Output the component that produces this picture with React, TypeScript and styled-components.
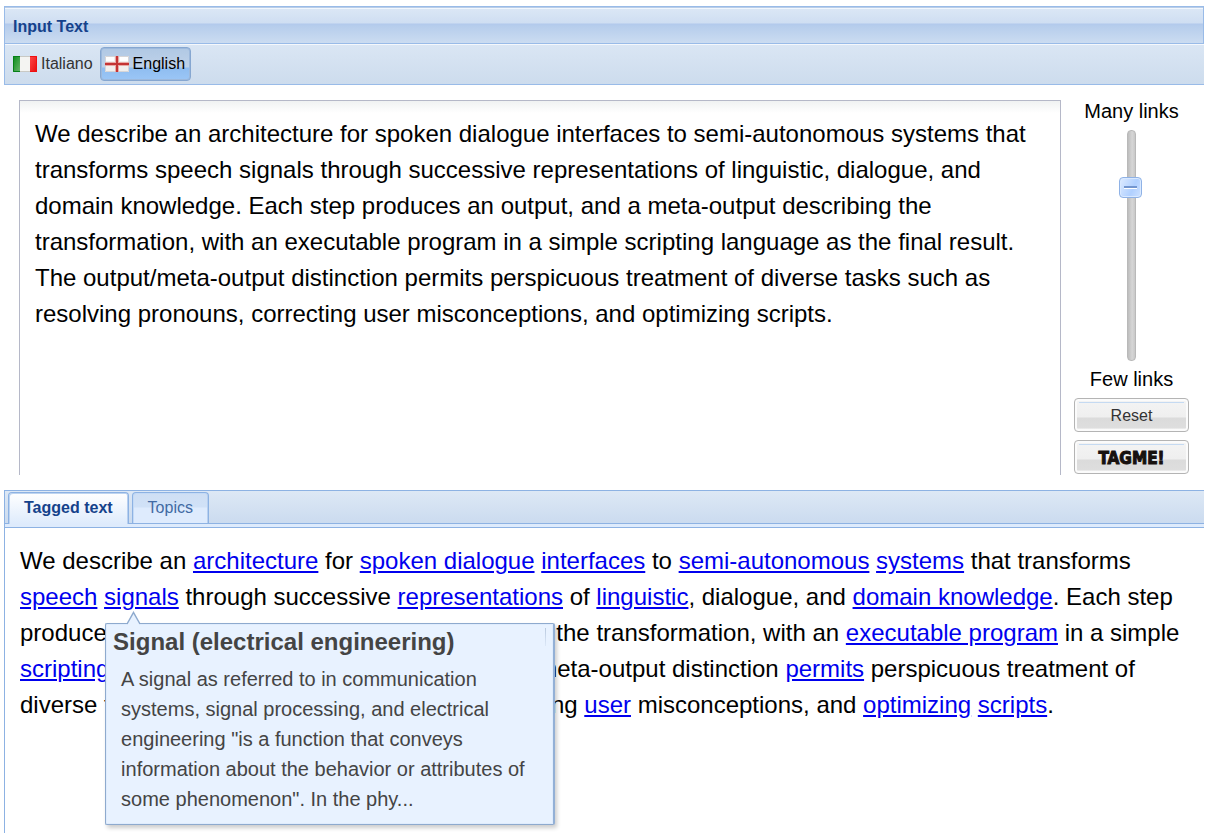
import React, { useState } from "react";
import styled, { createGlobalStyle } from "styled-components";

const GlobalStyle = createGlobalStyle`
  * { box-sizing: border-box; }
  body {
    margin: 0;
    background: #fff;
    color: #000;
    font-family: "Liberation Sans", Arial, sans-serif;
    font-size: 16px;
  }
`;

const Page = styled.main`
  display: flex;
  flex-direction: column;
  min-height: 100vh;
  padding: 6px 3px 0 4px;
`;

const PanelHeader = styled.h1`
  margin: 0;
  height: 38px;
  padding: 1px 8px 0;
  border: 1px solid #99bbe8;
  box-shadow: inset 0 1px #b9cde8, inset 0 2px #f2f7fd;
  background: linear-gradient(#dce8f6 0, #cfdef2 16px, #b2c9ec 17px, #b6cdec 19px, #cbdcf1 100%);
  color: #15428b;
  font-size: 16px;
  line-height: 38px;
`;

const Toolbar = styled.div`
  display: flex;
  align-items: center;
  gap: 2px;
  height: 41px;
  padding-left: 4px;
  border-left: 1px solid #99bbe8;
  border-bottom: 1px solid #99bbe8;
  box-shadow: inset 0 1px #f5f8fc;
  background: linear-gradient(#dae6f4, #cddced);
`;

const LanguageButton = styled.button<{ $active: boolean }>`
  display: flex;
  align-items: center;
  gap: 4px;
  height: 34px;
  padding: 0 ${(p) => (p.$active ? "5px" : "4px")} 0 4px;
  border: 1px solid ${(p) => (p.$active ? "#86a7d1" : "transparent")};
  border-left-width: ${(p) => (p.$active ? "1px" : "0")};
  border-radius: 4px;
  box-shadow: ${(p) => (p.$active ? "inset 0 0 0 1px #9db9dc" : "none")};
  background: ${(p) =>
    p.$active
      ? "linear-gradient(#b0c8e4 0, #bfd2e9 19px, #8fbdf0 20px, #9bc6f6 100%)"
      : "none"};
  color: ${(p) => (p.$active ? "#000" : "#333")};
  font: inherit;
  cursor: pointer;
`;

const InputArea = styled.section`
  display: grid;
  grid-template-columns: 1fr 115px;
  gap: 13px;
  padding: 15px;
`;

const SourceText = styled.textarea`
  display: block;
  width: 100%;
  height: 375px;
  padding: 15px;
  border: 1px solid #b5b8c8;
  border-bottom: 0;
  outline: none;
  resize: none;
  background: linear-gradient(#f0f2f2, #fff 12px);
  color: #000;
  font: 24px/36px "Liberation Sans", Arial, sans-serif;
`;

const Controls = styled.div`
  display: flex;
  flex-direction: column;
  align-items: center;
`;

const SliderLabel = styled.label`
  font-size: 20px;
  line-height: 22px;
`;

const Slider = styled.input`
  appearance: none;
  writing-mode: vertical-lr;
  direction: rtl;
  width: 23px;
  height: 231px;
  margin: 8px 0 7px;
  background: none;
  cursor: pointer;

  &::-webkit-slider-runnable-track {
    width: 9px;
    border: 1px solid #b9b9b9;
    border-radius: 4px;
    background: linear-gradient(to right, #bdbdbd, #d6d6d6 60%, #c8c8c8);
    margin: 0 auto;
  }

  &::-webkit-slider-thumb {
    appearance: none;
    width: 23px;
    height: 21px;
    margin-left: -9px;
    border: 1px solid #8fb2e6;
    border-radius: 4px;
    box-shadow: inset 0 0 0 1px #d9e9ff;
    background:
      linear-gradient(#7396cf, #7396cf) center 8px / 13px 2px no-repeat,
      linear-gradient(#fff, #fff) center 10px / 13px 1px no-repeat,
      linear-gradient(115deg, #deebff, #b0d0ff 60%, #cfe2ff);
  }
`;

const ActionButton = styled.button`
  display: flex;
  align-items: center;
  justify-content: center;
  width: 100%;
  height: 34px;
  margin-top: 8px;
  padding: 2px 0 0;
  border: 1px solid #b4b4b4;
  border-radius: 4px;
  box-shadow: inset 0 0 0 2px #fbfbfb;
  background:
    linear-gradient(#c5daf2, #c5daf2) center 3px / calc(100% - 8px) 1px no-repeat,
    linear-gradient(#f4f4f4 0, #efefef 18px, #dbdbdb 19px, #dedede 29px, #f5f5f5 30px);
  color: #333;
  font: inherit;
  cursor: pointer;
`;

const LogoText = styled.span`
  color: #17110f;
  font-family: "DejaVu Sans Condensed", "DejaVu Sans", sans-serif;
  font-size: 17px;
  font-weight: 700;
  line-height: 24px;
  -webkit-text-stroke: 1px #17110f;
`;

const TabPanel = styled.section`
  display: flex;
  flex: 1;
  flex-direction: column;
  border-top: 1px solid #8db2e3;
  border-left: 1px solid #8db2e3;
`;

const TabStrip = styled.div`
  display: flex;
  align-items: flex-end;
  gap: 3px;
  height: 33px;
  padding-left: 3px;
  border-bottom: 1px solid #8db2e3;
  background: linear-gradient(#dde8f5, #cbdbef);
`;

const Tab = styled.button<{ $active: boolean }>`
  height: ${(p) => (p.$active ? "32px" : "31px")};
  margin-bottom: ${(p) => (p.$active ? "-1px" : "0")};
  padding: 0 15px ${(p) => (p.$active ? "2px" : "0")};
  border: 1px solid #8db2e3;
  border-bottom: 0;
  border-radius: 4px 4px 0 0;
  box-shadow: inset 1px 1px ${(p) => (p.$active ? "#bed4f0" : "#c4daf6")}, inset -1px 0 #b8d0f0;
  background: ${(p) =>
    p.$active
      ? "linear-gradient(#fff, #deebfc)"
      : "linear-gradient(#cfdff4 0, #d0e1f7 14px, #deebfd 15px, #deebfd 100%)"};
  color: ${(p) => (p.$active ? "#15428b" : "#416aa3")};
  font: inherit;
  font-weight: ${(p) => (p.$active ? 700 : 400)};
  cursor: pointer;
`;

const TabSpacer = styled.div`
  height: 4px;
  border-bottom: 1px solid #8db2e3;
  background: #deebfc;
`;

const TaggedText = styled.p`
  margin: 0;
  padding: 15px;
  font-size: 24px;
  line-height: 36px;
`;

const TagLink = styled.a`
  color: #0000ee;
  text-decoration: underline;
`;

const TooltipAnchor = styled.span`
  position: relative;
`;

const Tooltip = styled.span`
  position: absolute;
  z-index: 1;
  top: 40px;
  left: 1px;
  width: 450px;
  padding: 0 16px 10px 15px;
  border: 1px solid #8eaace;
  border-right: 2px solid #93b0d6;
  border-radius: 2px;
  box-shadow: inset 0 0 0 1px #dfecfd, 2px 3px 4px rgba(0, 0, 0, 0.2);
  background:
    linear-gradient(#b9c9de, #dce8f8) right 7px top 4px / 1px 18px no-repeat,
    #e8f2ff;
  color: #444;
  font-size: 20px;
  line-height: 30px;
`;

const TooltipArrow = styled.svg`
  position: absolute;
  top: -13px;
  left: 20px;
`;

const TooltipTitle = styled.strong`
  display: block;
  margin: 0 0 4px -8px;
  font-size: 24px;
  line-height: 36px;
`;

const ItalianFlag = () => (
  <svg width="24" height="16" viewBox="0 0 24 16" aria-hidden="true">
    <defs>
      <linearGradient id="green" x2="1" y2="1">
        <stop stopColor="#078b17" />
        <stop offset="1" stopColor="#68b56c" />
      </linearGradient>
      <linearGradient id="red" x2="1" y2="1">
        <stop stopColor="#ff4747" />
        <stop offset="1" stopColor="#e60c0c" />
      </linearGradient>
    </defs>
    <path fill="#f4f4f2" d="M0 0h24v16H0z" />
    <path fill="url(#green)" d="M0 0h7v16H0z" />
    <path fill="url(#red)" d="M17 0h7v16h-7z" />
    <path fill="none" stroke="#078018" d="M7 .5H.5v15H7" />
    <path fill="none" stroke="#f01010" d="M17 .5h6.500v15H17" />
    <path stroke="#c9c9c4" d="M7 .5h10M7 15.500h10" />
  </svg>
);

const EnglishFlag = () => (
  <svg width="24" height="16" viewBox="0 0 24 16" aria-hidden="true">
    <path fill="#f1efed" d="M0 0h24v16H0z" />
    <path fill="#fff" d="M1 1h8v4H1zM15 1h8v4h-8z" />
    <path fill="none" stroke="#d6d5d7" d="M.5.5h23v15H.5z" />
    <path fill="#e9aaa6" d="M0 6h24v4H0zM10 0h4v16h-4z" />
    <path fill="#c43434" d="M0 7h24v2H0zM11 0h2v16h-2z" />
  </svg>
);

const sourceText =
  "We describe an architecture for spoken dialogue interfaces to semi-autonomous systems that transforms speech signals through successive representations of linguistic, dialogue, and domain knowledge. Each step produces an output, and a meta-output describing the transformation, with an executable program in a simple scripting language as the final result. The output/meta-output distinction permits perspicuous treatment of diverse tasks such as resolving pronouns, correcting user misconceptions, and optimizing scripts.";

const Tag = ({ children }: { children: string }) => <TagLink href="#">{children}</TagLink>;

export default function App() {
  const [language, setLanguage] = useState("en");
  const [tab, setTab] = useState("tagged");
  const [links, setLinks] = useState(78);

  return (
    <Page>
      <GlobalStyle />
      <PanelHeader>Input Text</PanelHeader>
      <Toolbar>
        <LanguageButton type="button" $active={language === "it"} onClick={() => setLanguage("it")}>
          <ItalianFlag />
          Italiano
        </LanguageButton>
        <LanguageButton type="button" $active={language === "en"} onClick={() => setLanguage("en")}>
          <EnglishFlag />
          English
        </LanguageButton>
      </Toolbar>
      <InputArea>
        <SourceText aria-label="Input Text" spellCheck={false} defaultValue={sourceText} />
        <Controls>
          <SliderLabel htmlFor="links">Many links</SliderLabel>
          <Slider
            id="links"
            type="range"
            min="0"
            max="100"
            value={links}
            onChange={(e) => setLinks(Number(e.target.value))}
          />
          <SliderLabel htmlFor="links">Few links</SliderLabel>
          <ActionButton type="button" onClick={() => setLinks(78)}>
            Reset
          </ActionButton>
          <ActionButton type="button">
            <LogoText>TAGME!</LogoText>
          </ActionButton>
        </Controls>
      </InputArea>
      <TabPanel>
        <TabStrip role="tablist">
          <Tab type="button" role="tab" aria-selected={tab === "tagged"} $active={tab === "tagged"} onClick={() => setTab("tagged")}>
            Tagged text
          </Tab>
          <Tab type="button" role="tab" aria-selected={tab === "topics"} $active={tab === "topics"} onClick={() => setTab("topics")}>
            Topics
          </Tab>
        </TabStrip>
        <TabSpacer />
        <TaggedText>
          We describe an <Tag>architecture</Tag> for <Tag>spoken dialogue</Tag> <Tag>interfaces</Tag> to{" "}
          <Tag>semi-autonomous</Tag> <Tag>systems</Tag> that transforms <Tag>speech</Tag>{" "}
          <TooltipAnchor>
            <Tag>signals</Tag>
            <Tooltip role="tooltip">
              <TooltipArrow width="16" height="14" viewBox="0 0 16 14" aria-hidden="true">
                <path fill="#e8f2ff" d="M1 14 7.500 1.500 14 14z" />
                <path fill="none" stroke="#8eaace" strokeWidth="1.500" d="M1 13 7.500 1.500 14 13" />
              </TooltipArrow>
              <TooltipTitle>Signal (electrical engineering)</TooltipTitle>
              A signal as referred to in communication systems, signal processing, and electrical engineering "is a
              function that conveys information about the behavior or attributes of some phenomenon". In the phy...
            </Tooltip>
          </TooltipAnchor>{" "}
          through successive <Tag>representations</Tag> of <Tag>linguistic</Tag>, dialogue, and{" "}
          <Tag>domain knowledge</Tag>. Each step produces an output, and a meta-output describing the transformation,
          with an <Tag>executable program</Tag> in a simple <Tag>scripting language</Tag> as the final result. The
          output/meta-output distinction <Tag>permits</Tag> perspicuous treatment of diverse tasks such as resolving
          pronouns, correcting <Tag>user</Tag> misconceptions, and <Tag>optimizing</Tag> <Tag>scripts</Tag>.
        </TaggedText>
      </TabPanel>
    </Page>
  );
}
